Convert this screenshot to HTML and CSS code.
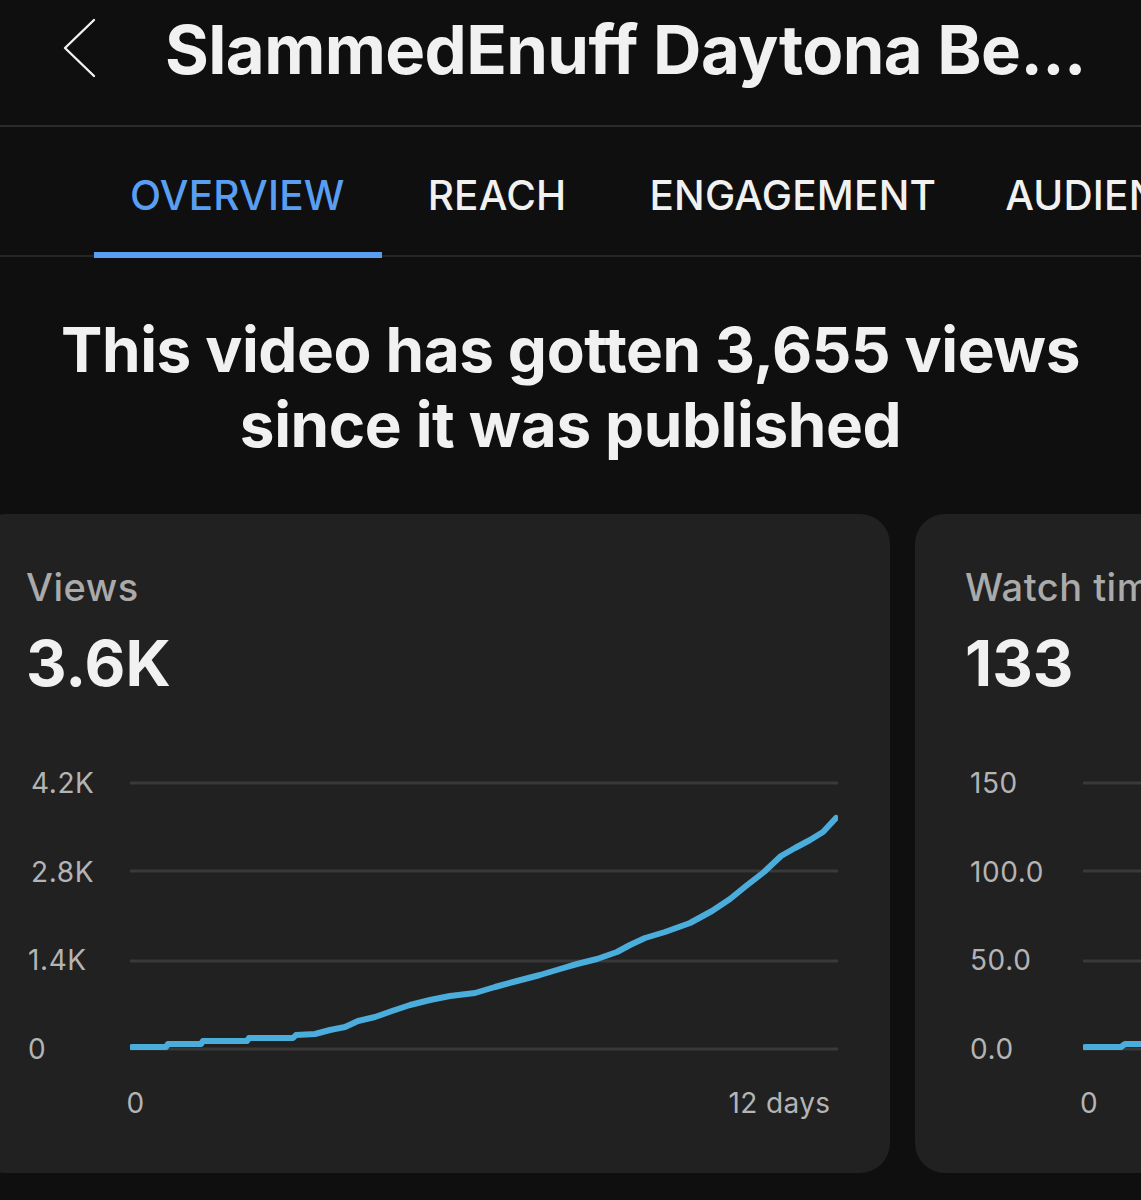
FILE: index.html
```html
<!DOCTYPE html>
<html lang="en">
<head>
<meta charset="utf-8">
<title>Video analytics</title>
<link rel="stylesheet" href="styles.css">
</head>
<body>
<div class="page">
  <header class="topbar">
    <svg class="back" width="34" height="60" viewBox="0 0 34 60" aria-hidden="true">
      <polyline points="31,2 2,30 31,58" fill="none" stroke="#f1f1f1" stroke-width="2.4" stroke-linecap="round" stroke-linejoin="round"/>
    </svg>
    <h1 class="title">SlammedEnuff Daytona Be...</h1>
  </header>

  <nav class="tabs">
    <div class="tab active">OVERVIEW</div>
    <div class="tab">REACH</div>
    <div class="tab">ENGAGEMENT</div>
    <div class="tab tab-last">AUDIENCE</div>
  </nav>

  <h2 class="headline">This video has gotten 3,655 views<br>since it was published</h2>

  <div class="cards">
    <section class="card">
      <div class="metric-label">Views</div>
      <div class="metric-value">3.6K</div>
      <div class="chart">
        <div class="y-axis">
          <span>4.2K</span><span>2.8K</span><span class="tight">1.4K</span><span class="tight">0</span>
        </div>
        <svg class="plot" width="708" height="296" viewBox="0 0 708 296">
          <g stroke="#393939" stroke-width="3">
            <line x1="0" y1="15" x2="708" y2="15"/>
            <line x1="0" y1="103" x2="708" y2="103"/>
            <line x1="0" y1="193" x2="708" y2="193"/>
            <line x1="0" y1="281" x2="708" y2="281"/>
          </g>
          <polyline fill="none" stroke="#4aaddc" stroke-width="6" stroke-linejoin="round" stroke-linecap="round"
            points="2,279 36,279 38,276 71,276 73,273 117,273 119,270 163,270 166,267 185,266 200,262 215,259 228,253 245,249 262,243 280,237 300,232 320,228 345,225 365,219 387,213 410,207 430,201 447,196 467,191 487,184 500,177 515,170 535,164 560,155 582,143 600,131 616,118 634,104 651,88 665,80 680,72 693,64 706,50"/>
        </svg>
        <div class="x-axis"><span>0</span><span>12 days</span></div>
      </div>
    </section>

    <section class="card">
      <div class="metric-label">Watch time (hours)</div>
      <div class="metric-value">133</div>
      <div class="chart chart-wide">
        <div class="y-axis">
          <span>150</span><span>100.0</span><span>50.0</span><span>0.0</span>
        </div>
        <svg class="plot" width="708" height="296" viewBox="0 0 708 296">
          <g stroke="#393939" stroke-width="3">
            <line x1="0" y1="15" x2="708" y2="15"/>
            <line x1="0" y1="103" x2="708" y2="103"/>
            <line x1="0" y1="193" x2="708" y2="193"/>
            <line x1="0" y1="281" x2="708" y2="281"/>
          </g>
          <polyline fill="none" stroke="#4aaddc" stroke-width="6" stroke-linejoin="round" stroke-linecap="round"
            points="2,279 38,279 42,276 90,276 95,273 140,272 185,268 230,256 280,240 340,226 400,210 460,193 520,172 580,146 630,108 670,82 706,58"/>
        </svg>
        <div class="x-axis"><span>0</span><span>12 days</span></div>
      </div>
    </section>
  </div>
</div>
</body>
</html>
```

FILE: styles.css
```css
* { box-sizing: border-box; }

html, body {
  margin: 0;
  padding: 0;
  background: #0f0f0f;
  overflow: hidden;
}

body {
  font-family: Inter, "Noto Sans", "Liberation Sans", sans-serif;
  color: #f1f1f1;
  width: 1141px;
  height: 1200px;
}

.page {
  width: 1141px;
  overflow: hidden;
}

.topbar {
  height: 127px;
  display: flex;
  align-items: flex-start;
  padding-left: 63px;
  gap: 68px;
  border-bottom: 2px solid #2c2c2c;
  white-space: nowrap;
}

.back {
  flex: none;
  margin-top: 18px;
}

.title {
  margin: 16px 0 0;
  font-size: 67px;
  font-weight: 700;
  letter-spacing: -0.6px;
  line-height: 1;
  color: #f1f1f1;
}

.tabs {
  height: 130px;
  display: flex;
  align-items: stretch;
  padding-left: 94px;
  gap: 10px;
  border-bottom: 2px solid #262626;
  white-space: nowrap;
}

.tab {
  position: relative;
  display: flex;
  align-items: center;
  padding: 8px 37px 0 36px;
  font-size: 40.5px;
  font-weight: 500;
  letter-spacing: 0.2px;
  color: #f1f1f1;
  flex: none;
}

.tab-last {
  margin-left: -14px;
}

.tab.active {
  color: #5a9ef2;
}

.tab.active::after {
  content: "";
  position: absolute;
  left: 0;
  right: 0;
  bottom: -3px;
  height: 6px;
  background: #5a9ef2;
}

.headline {
  margin: 0;
  padding-top: 55px;
  text-align: center;
  font-size: 62px;
  font-weight: 700;
  line-height: 75px;
  letter-spacing: -0.4px;
  color: #f1f1f1;
}

.cards {
  display: flex;
  gap: 25px;
  margin-left: -24px;
  margin-top: 52px;
}

.card {
  flex: none;
  width: 914px;
  height: 659px;
  background: #212121;
  border-radius: 30px;
  padding: 49px 0 0 50px;
  white-space: nowrap;
  overflow: hidden;
}

.metric-label {
  font-size: 38px;
  font-weight: 500;
  letter-spacing: 0.5px;
  color: #aaaaaa;
  line-height: 48px;
}

.metric-value {
  font-size: 63px;
  font-weight: 700;
  color: #f1f1f1;
  line-height: 76px;
  margin-top: 14px;
}

.chart {
  display: grid;
  grid-template-columns: max-content 708px;
  column-gap: 35px;
  margin-top: 67px;
}

.chart-wide {
  column-gap: 39px;
}

.y-axis {
  height: 296px;
  display: flex;
  flex-direction: column;
  justify-content: space-between;
  padding-left: 5px;
  font-size: 28px;
  letter-spacing: 0.6px;
  line-height: 30px;
  color: #b4b4b4;
}

.y-axis .tight {
  margin-left: -3px;
}

.plot {
  display: block;
}

.x-axis {
  grid-column: 2;
  display: flex;
  justify-content: space-between;
  margin-top: 24px;
  padding: 0 7px 0 0;
  margin-left: -3px;
  font-size: 28px;
  letter-spacing: 0.4px;
  line-height: 30px;
  color: #b4b4b4;
}
```
